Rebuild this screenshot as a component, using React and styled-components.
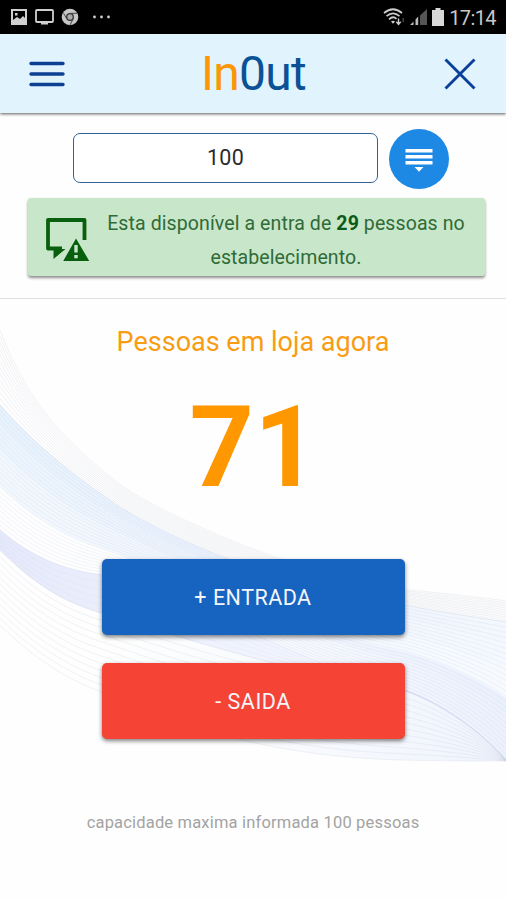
import React from 'react'
import styled, { createGlobalStyle } from 'styled-components'

const GlobalStyle = createGlobalStyle`
  * {
    box-sizing: border-box;
  }

  body {
    margin: 0;
    font-family: Roboto, "Liberation Sans", sans-serif;
    background: #fefefe;
  }
`

// wave outlines, three cubic segments each: start point + 9 points
const WAVES = {
  crest: [0, 330, 30, 410, 75, 450, 125, 488, 175, 520, 300, 575, 400, 589, 440, 593, 480, 597, 506, 601],
  upper: [0, 405, 40, 450, 80, 480, 120, 507, 190, 550, 300, 590, 405, 605, 440, 612, 480, 618, 506, 622],
  fold: [0, 530, 30, 555, 60, 570, 105, 575, 220, 610, 300, 665, 405, 690, 440, 702, 480, 730, 506, 760],
  under: [0, 550, 30, 580, 60, 602, 105, 614, 220, 650, 300, 673, 405, 691, 440, 703, 480, 731, 506, 760],
  base: [0, 625, 40, 665, 80, 685, 105, 693, 200, 735, 290, 757, 400, 760, 440, 761, 480, 761, 506, 761],
}

const mix = (a, b, t) => a.map((v, i) => +(v + (b[i] - v) * t).toFixed(1))

const toPath = (p) => `M${p[0]},${p[1]} C${p.slice(2).join(' ')}`

const toArea = (a, b) => {
  const back = []
  for (let i = b.length - 2; i >= 0; i -= 2) {
    back.push(b[i], b[i + 1])
  }
  return `${toPath(a)} L${back[0]},${back[1]} C${back.slice(2).join(' ')} Z`
}

const Strands = ({ from, to, count, color, opacity }) => (
  <g fill="none" stroke={color} strokeOpacity={opacity} strokeWidth="0.8">
    {Array.from({ length: count + 1 }, (_, i) => (
      <path key={i} d={toPath(mix(from, to, i / count))} />
    ))}
  </g>
)

const WaveBackground = () => (
  <Waves viewBox="0 0 506 900" aria-hidden="true">
    <defs>
      <linearGradient id="sky" x1="0" x2="1" y1="0" y2="0">
        <stop offset="0" stopColor="#d9ebfb" stopOpacity="0.6" />
        <stop offset="0.5" stopColor="#dfeafb" stopOpacity="0.6" />
        <stop offset="1" stopColor="#edf4fd" stopOpacity="0.6" />
      </linearGradient>
      <linearGradient id="lilac" x1="0" x2="1" y1="0" y2="0">
        <stop offset="0" stopColor="#d9dff8" stopOpacity="0.7" />
        <stop offset="0.4" stopColor="#e6ebfc" stopOpacity="0.6" />
        <stop offset="1" stopColor="#e6ebfc" stopOpacity="0.4" />
      </linearGradient>
      <linearGradient id="foam" x1="0" x2="1" y1="0" y2="0">
        <stop offset="0.2" stopColor="#eef3fd" stopOpacity="0" />
        <stop offset="1" stopColor="#e7edfc" stopOpacity="0.8" />
      </linearGradient>
    </defs>
    <path d={toArea(WAVES.upper, mix(WAVES.upper, WAVES.fold, 0.65))} fill="url(#sky)" opacity="0.6" />
    <path d={toArea(WAVES.upper, mix(WAVES.upper, WAVES.fold, 0.35))} fill="url(#sky)" opacity="0.4" />
    <path d={toArea(WAVES.upper, mix(WAVES.upper, WAVES.fold, 0.15))} fill="url(#sky)" opacity="0.4" />
    <path d={toArea(mix(WAVES.upper, WAVES.fold, 0.55), WAVES.fold)} fill="url(#foam)" />
    <path d={toArea(WAVES.fold, WAVES.under)} fill="url(#lilac)" />
    <path d={toArea(WAVES.under, WAVES.base)} fill="url(#foam)" opacity="0.8" />
    <Strands from={WAVES.crest} to={WAVES.upper} count={12} color="#c9cdd6" opacity="0.32" />
    <Strands from={WAVES.upper} to={WAVES.fold} count={26} color="#b9c6e4" opacity="0.24" />
    <Strands from={WAVES.fold} to={WAVES.under} count={5} color="#bcc5ee" opacity="0.16" />
    <Strands from={WAVES.under} to={WAVES.base} count={11} color="#c6ccdb" opacity="0.32" />
  </Waves>
)

const StatusBar = () => (
  <Status>
    <StatusGroup $gap="7px">
      <svg width="18" height="16" viewBox="0 0 18 16">
        <path fill="#d0d0d0" fillRule="evenodd" d="M1 0h16v16H1zM3 2v9l4-3 3 2 3-3 2 2V2zM5 4h2.5v2.5H5z" />
      </svg>
      <svg width="19" height="16" viewBox="0 0 19 16">
        <rect x="1" y="1" width="17" height="12" rx="1" fill="none" stroke="#cfcfcf" strokeWidth="1.8" />
        <path fill="#cfcfcf" d="M6 13h7v2.5H6z" />
      </svg>
      <svg width="18" height="18" viewBox="0 0 18 18">
        <circle cx="9" cy="9" r="8.3" fill="#c6c6c6" />
        <circle cx="9" cy="9" r="3.3" fill="#aaa" stroke="#333" strokeWidth="1.3" />
        <path d="M9 5.3h7M5.8 10.8 2.5 5.2M12.2 10.8 9 17" stroke="#444" strokeWidth="1" />
      </svg>
      <svg width="32" height="16" viewBox="0 0 32 16" fill="#d0d0d0">
        <circle cx="8.500" cy="8" r="1.4" />
        <circle cx="15.500" cy="8" r="1.4" />
        <circle cx="22.500" cy="8" r="1.4" />
      </svg>
    </StatusGroup>
    <StatusGroup $gap="5px">
      <svg width="22" height="18" viewBox="0 0 22 18" fill="none" stroke="#ccc" strokeWidth="1.7">
        <path d="M1 5Q10 -2.500 19 5M3.500 8.200Q10 2.500 16.500 8.200M6 11.300Q10 7.500 13.500 10.800" />
        <path d="M8 13.500q2-1.500 4 0l-2 2.300z" fill="#ccc" stroke="none" />
        <path d="M15.500 10.500v6M13.300 13.700l2.200 2.600 2.200-2.600" strokeWidth="1.4" />
        <path d="M20.200 14V10" stroke="#555" strokeWidth="1.2" />
      </svg>
      <svg width="17" height="17" viewBox="0 0 17 17">
        <path d="M0 16h3.500v-3.500zM5.500 16h2.700V7.500l-2.700 3z" fill="#bbb" />
        <path d="M10 16h7V0l-7 6.5z" fill="#555" />
      </svg>
      <svg width="12" height="18" viewBox="0 0 12 18">
        <path fill="#d8d8d8" d="M3.500 0h5v2H12v16H0V2h3.500z" />
      </svg>
      <Clock>17:14</Clock>
    </StatusGroup>
  </Status>
)

const App = () => {
  return (
    <Screen>
      <GlobalStyle />
      <WaveBackground />
      <StatusBar />
      <Header>
        <IconButton aria-label="menu">
          <svg width="36" height="28" viewBox="0 0 36 28" stroke="#0d3f93" strokeWidth="3.4" strokeLinecap="round">
            <path d="M2 3.5h32M2 14h32M2 24.5h32" />
          </svg>
        </IconButton>
        <Logo>
          <LogoPart $color="#fb9706">In</LogoPart>
          <LogoPart $color="#0a5295">0ut</LogoPart>
        </Logo>
        <IconButton aria-label="fechar">
          <svg width="32" height="32" viewBox="0 0 32 32" stroke="#0a409b" strokeWidth="2.9">
            <path d="M1.5 1.5l29 29M30.5 1.5l-29 29" />
          </svg>
        </IconButton>
      </Header>
      <Capacity>
        <CapacityRow>
          <CapacityInput defaultValue="100" />
          <RoundButton aria-label="aplicar">
            <svg width="28" height="24" viewBox="0 0 28 24" fill="#fff">
              <path d="M.5 0h27v3.600H.5zM.5 6h27v3.600H.5zM.5 12h27v3.600H.5zM9.500 18h9L14 22.800z" />
            </svg>
          </RoundButton>
        </CapacityRow>
        <Alert>
          <svg width="46" height="46" viewBox="0 0 46 46">
            <path fill="none" stroke="#08600e" strokeWidth="3.800" strokeLinejoin="round" d="M39.500 24V4H3v28.500h14" />
            <path fill="#08600e" d="M8.500 33h12L8.500 43z" />
            <path fill="#08600e" stroke="#c8e6c9" strokeWidth="2" d="M31 20.500 46 46H16.500z" />
            <path fill="#c8e6c9" d="M29.300 29h3.400v7.500h-3.400zM29.300 39h3.400v3.200h-3.400z" />
          </svg>
          <AlertText>
            Esta disponível a entra de <b>29</b> pessoas no
            <br />
            estabelecimento.
          </AlertText>
        </Alert>
      </Capacity>
      <Counter>
        <CounterTitle>Pessoas em loja agora</CounterTitle>
        <CounterValue>71</CounterValue>
        <Actions>
          <ActionButton $bg="#1763c0">+ ENTRADA</ActionButton>
          <ActionButton $bg="#f54336">- SAIDA</ActionButton>
        </Actions>
        <Footnote>capacidade maxima informada 100 pessoas</Footnote>
      </Counter>
    </Screen>
  )
}

export default App

const Screen = styled.div`
  position: relative;
  display: flex;
  flex-direction: column;
  width: 506px;
  height: 900px;
  overflow: hidden;
  isolation: isolate;
`

const Waves = styled.svg`
  position: absolute;
  inset: 0;
  z-index: -1;
`

const Status = styled.div`
  display: flex;
  align-items: center;
  justify-content: space-between;
  height: 34px;
  padding: 0 10px;
  background: #000;
`

const StatusGroup = styled.div`
  display: flex;
  align-items: center;
  gap: ${({ $gap }) => $gap};
`

const Clock = styled.span`
  padding-top: 2px;
  font-size: 20px;
  line-height: 32px;
  letter-spacing: -0.6px;
  color: #c9c9c9;
`

const Header = styled.header`
  display: flex;
  align-items: center;
  justify-content: space-between;
  height: 79px;
  padding: 0 30px 0 29px;
  background: #e1f4fe;
  box-shadow: 0 1px 3px rgba(0, 0, 0, 0.65);
`

const IconButton = styled.button`
  display: flex;
  padding: 0;
  border: 0;
  background: none;
`

const Logo = styled.h1`
  margin: 0 2px 0 0;
  font-size: 48px;
  font-weight: 400;
  line-height: 77px;
  letter-spacing: -0.7px;
`

const LogoPart = styled.span`
  color: ${({ $color }) => $color};
`

const Capacity = styled.section`
  height: 186px;
  padding: 15px 21px 0 28px;
  border-bottom: 1px solid #dedfe1;
`

const CapacityRow = styled.div`
  display: flex;
  align-items: center;
  gap: 11px;
  height: 61px;
  padding-left: 45px;
`

const CapacityInput = styled.input`
  width: 305px;
  height: 50px;
  margin-top: -2px;
  padding: 0;
  border: 1.5px solid #34609a;
  border-radius: 7px;
  background: #fff;
  font-family: inherit;
  font-size: 21.5px;
  letter-spacing: 0.3px;
  text-align: center;
  color: #2b2b2b;
`

const RoundButton = styled.button`
  display: flex;
  align-items: center;
  justify-content: center;
  width: 60px;
  height: 60px;
  padding: 5px 0 0;
  border: 0;
  border-radius: 50%;
  background: #1e88e5;
`

const Alert = styled.div`
  display: flex;
  align-items: center;
  width: 457px;
  height: 78px;
  margin-top: 9px;
  padding: 4px 4px 0 17px;
  border-radius: 3px;
  background: #c8e6c9;
  box-shadow: 0 2px 3px rgba(0, 0, 0, 0.45);
`

const AlertText = styled.p`
  flex: 1;
  margin: 0;
  padding-top: 3px;
  font-size: 19.5px;
  line-height: 34px;
  letter-spacing: 0.1px;
  text-align: center;
  white-space: nowrap;
  color: #2f6b38;

  b {
    color: #0c5a17;
  }
`

const Counter = styled.main`
  display: flex;
  flex-direction: column;
  align-items: center;
`

const CounterTitle = styled.h2`
  margin: 23px 0 0;
  font-size: 27px;
  font-weight: 400;
  line-height: 40px;
  color: #f89c14;
`

const CounterValue = styled.div`
  margin: 21px 0 0;
  padding-left: 2px;
  font-size: 112.5px;
  font-weight: 700;
  line-height: 130px;
  color: #ff9800;
`

const Actions = styled.div`
  display: flex;
  flex-direction: column;
  gap: 28px;
  margin-top: 46px;
`

const ActionButton = styled.button`
  width: 303px;
  height: 76px;
  padding: 0;
  border: 0;
  border-radius: 5px;
  background: ${({ $bg }) => $bg};
  box-shadow: 0 2px 4px rgba(0, 0, 0, 0.5);
  font-family: inherit;
  font-size: 21.5px;
  letter-spacing: 0.5px;
  color: #f4f6fa;
`

const Footnote = styled.p`
  margin: 73px 0 0;
  font-size: 16.5px;
  line-height: 22px;
  letter-spacing: 0.18px;
  color: #a3a3a3;
`
